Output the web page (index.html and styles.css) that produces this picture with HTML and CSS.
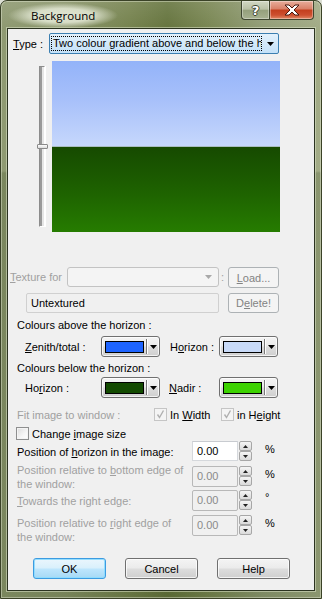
FILE: index.html
```html
<!DOCTYPE html>
<html lang="en">
<head>
<meta charset="utf-8">
<title>Background</title>
<link rel="stylesheet" href="styles.css">
</head>
<body>
<div class="window">
  <div class="titlebar">
    <div class="title"><span>Background</span></div>
    <div class="caption">
      <div class="cap-btn cap-help"><span class="qmark">?</span></div>
      <div class="cap-btn cap-close">
        <svg width="18" height="12" viewBox="0 0 18 12"><path d="M2 1 H6 L9 4 L12 1 H16 L11 6 L16 11 H12 L9 8 L6 11 H2 L7 6 Z" fill="#fff" stroke="#4a1a10" stroke-width="1" stroke-linejoin="round"/></svg>
      </div>
    </div>
  </div>
  <div class="client">
    <div class="row row-type">
      <span class="lbl-type"><u>T</u>ype :</span>
      <div class="combo combo-focus">
        <span class="combo-text">Two colour gradient above and below the h</span>
        <span class="combo-arrow"><svg width="7" height="4" viewBox="0 0 7 4"><path d="M0 0H7L3.5 4Z" fill="#000"/></svg></span>
      </div>
    </div>

    <div class="row row-preview">
      <div class="slider">
        <div class="track"></div>
        <div class="thumb"></div>
      </div>
      <div class="preview">
        <div class="sky"></div>
        <div class="ground"></div>
      </div>
    </div>

    <div class="row row-texture">
      <span class="lbl-texture dis"><u>T</u>exture for</span>
      <div class="combo combo-dis">
        <span class="combo-fill"></span>
        <span class="combo-arrow"><svg width="7" height="4" viewBox="0 0 7 4"><path d="M0 0H7L3.5 4Z" fill="#a8a8a8"/></svg></span>
      </div>
      <span class="colon dis">:</span>
      <div class="btn btn-dis btn-small"><span><u>L</u>oad...</span></div>
    </div>

    <div class="row row-untex">
      <div class="field">Untextured</div>
      <div class="btn btn-dis btn-small"><span>D<u>e</u>lete!</span></div>
    </div>

    <div class="section-label sl-above">Colours above the horizon :</div>
    <div class="row row-colors">
      <span class="clr-lbl1"><u>Z</u>enith/total :</span>
      <div class="clrbtn"><span class="swatch sw-zenith"></span><span class="clr-sep"></span><span class="clr-arrow"><svg width="7" height="4" viewBox="0 0 7 4"><path d="M0 0H7L3.5 4Z" fill="#000"/></svg></span></div>
      <span class="clr-lbl2">H<u>o</u>rizon :</span>
      <div class="clrbtn"><span class="swatch sw-skyhor"></span><span class="clr-sep"></span><span class="clr-arrow"><svg width="7" height="4" viewBox="0 0 7 4"><path d="M0 0H7L3.5 4Z" fill="#000"/></svg></span></div>
    </div>

    <div class="section-label sl-below">Colours below the horizon :</div>
    <div class="row row-colors row-colors2">
      <span class="clr-lbl1">Ho<u>r</u>izon :</span>
      <div class="clrbtn"><span class="swatch sw-gndhor"></span><span class="clr-sep"></span><span class="clr-arrow"><svg width="7" height="4" viewBox="0 0 7 4"><path d="M0 0H7L3.5 4Z" fill="#000"/></svg></span></div>
      <span class="clr-lbl2 clr-lbl2b"><u>N</u>adir :</span>
      <div class="clrbtn"><span class="swatch sw-nadir"></span><span class="clr-sep"></span><span class="clr-arrow"><svg width="7" height="4" viewBox="0 0 7 4"><path d="M0 0H7L3.5 4Z" fill="#000"/></svg></span></div>
    </div>

    <div class="row row-fit">
      <span class="lbl-fit dis">Fit image to window :</span>
      <div class="chk-item chk-item1">
        <span class="chk chk-dis"><svg width="11" height="11" viewBox="0 0 11 11"><path d="M2.5 5.5 L4.5 8.5 L8.5 1.5" fill="none" stroke="#b0b0b0" stroke-width="1.4"/></svg></span>
        <span class="chk-text">In <u>W</u>idth</span>
      </div>
      <div class="chk-item">
        <span class="chk chk-dis"><svg width="11" height="11" viewBox="0 0 11 11"><path d="M2.5 5.5 L4.5 8.5 L8.5 1.5" fill="none" stroke="#b0b0b0" stroke-width="1.4"/></svg></span>
        <span class="chk-text">in H<u>e</u>ight</span>
      </div>
    </div>

    <div class="row row-change">
      <span class="chk chk-en"></span>
      <span class="chk-text">Change <u>i</u>mage size</span>
    </div>

    <div class="row prow prow1">
      <span class="plabel">Position of <u>h</u>orizon in the image:</span>
      <div class="spinbox">0.00</div>
      <div class="spin">
        <span class="spin-btn"><svg width="5" height="3" viewBox="0 0 5 3"><path d="M0 3H5L2.5 0Z" fill="#222"/></svg></span>
        <span class="spin-btn"><svg width="5" height="3" viewBox="0 0 5 3"><path d="M0 0H5L2.5 3Z" fill="#222"/></svg></span>
      </div>
      <span class="unit">%</span>
    </div>

    <div class="row prow prow2">
      <span class="plabel dis"><span class="pl-line">Position relative to <u>b</u>ottom edge of</span><span class="pl-line">the window:</span></span>
      <div class="spinbox spinbox-dis">0.00</div>
      <div class="spin">
        <span class="spin-btn"><svg width="5" height="3" viewBox="0 0 5 3"><path d="M0 3H5L2.5 0Z" fill="#222"/></svg></span>
        <span class="spin-btn"><svg width="5" height="3" viewBox="0 0 5 3"><path d="M0 0H5L2.5 3Z" fill="#222"/></svg></span>
      </div>
      <span class="unit">%</span>
    </div>

    <div class="row prow prow3">
      <span class="plabel dis"><u>T</u>owards the right edge:</span>
      <div class="spinbox spinbox-dis">0.00</div>
      <div class="spin">
        <span class="spin-btn"><svg width="5" height="3" viewBox="0 0 5 3"><path d="M0 3H5L2.5 0Z" fill="#222"/></svg></span>
        <span class="spin-btn"><svg width="5" height="3" viewBox="0 0 5 3"><path d="M0 0H5L2.5 3Z" fill="#222"/></svg></span>
      </div>
      <span class="unit unit-deg">°</span>
    </div>

    <div class="row prow prow4">
      <span class="plabel plabel-low dis"><span class="pl-line">Position relative to <u>r</u>ight edge of</span><span class="pl-line">the window:</span></span>
      <div class="spinbox spinbox-dis">0.00</div>
      <div class="spin">
        <span class="spin-btn"><svg width="5" height="3" viewBox="0 0 5 3"><path d="M0 3H5L2.5 0Z" fill="#222"/></svg></span>
        <span class="spin-btn"><svg width="5" height="3" viewBox="0 0 5 3"><path d="M0 0H5L2.5 3Z" fill="#222"/></svg></span>
      </div>
      <span class="unit">%</span>
    </div>

    <div class="row row-buttons">
      <div class="btn btn-default"><span>OK</span></div>
      <div class="btn"><span>Cancel</span></div>
      <div class="btn"><span>Help</span></div>
    </div>
  </div>
</div>
</body>
</html>
```

FILE: styles.css
```css
* { box-sizing: border-box; }
html, body { margin: 0; padding: 0; }
body {
  width: 322px;
  height: 599px;
  overflow: hidden;
  background: #dcdfd4;
  font-family: "Liberation Sans", Arial, sans-serif;
  font-size: 11px;
  color: #000;
}
u { text-decoration: underline; text-underline-offset: 1px; }

.window {
  width: 322px;
  height: 599px;
  border: 1px solid #3a4227;
  border-radius: 7px 7px 0 0;
  display: flex;
  flex-direction: column;
  background:
    linear-gradient(180deg, rgba(255,255,255,0.10) 0, rgba(255,255,255,0) 27px),
    linear-gradient(180deg, rgba(0,0,0,0) 170px, rgba(30,50,5,0.18) 172px),
    linear-gradient(90deg, #8f9a72 0%, #8a956b 20%, #76834f 40%, #66753f 52%, #7a8754 65%, #939e78 82%, #a3ac87 100%);
  box-shadow: inset 0 0 0 1px rgba(230,235,215,0.45);
  overflow: hidden;
}

.titlebar {
  flex: none;
  height: 27px;
  display: flex;
  justify-content: space-between;
  align-items: flex-start;
}
.title {
  margin: 2px 0 0 7px;
  height: 25px;
  padding: 0 23px;
  display: flex;
  align-items: center;
  background: radial-gradient(closest-side, rgba(228,233,214,0.95) 0%, rgba(228,233,214,0.85) 55%, rgba(228,233,214,0.35) 82%, rgba(228,233,214,0) 100%);
  font-family: "Open Sans", "Liberation Sans", sans-serif;
  font-size: 11.5px;
  color: #000;
}

.caption {
  display: flex;
  margin-right: 7px;
  height: 19px;
}
.cap-btn {
  height: 19px;
  display: flex;
  align-items: center;
  justify-content: center;
  border: 1px solid #3f4630;
  border-top: none;
  box-shadow: inset 0 0 0 1px rgba(255,255,255,0.35);
}
.cap-help {
  width: 28px;
  border-radius: 0 0 0 4px;
  border-right: none;
  background: linear-gradient(180deg, #d2d8c4 0%, #b9c1a6 45%, #95a07c 52%, #a7b190 100%);
}
.qmark {
  font-family: "DejaVu Sans", sans-serif;
  font-weight: bold;
  font-size: 13px;
  color: #fff;
  text-shadow: -1px 0 #3c4330, 1px 0 #3c4330, 0 -1px #3c4330, 0 1px #3c4330;
  line-height: 1;
}
.cap-close {
  width: 45px;
  border-radius: 0 0 4px 0;
  background: linear-gradient(180deg, #e8ad9b 0%, #d9826a 42%, #c4401f 52%, #cd4f2f 78%, #e08a66 100%);
}

.client {
  flex: 1;
  margin: 0 6px 7px 6px;
  border: 1px solid #2b3320;
  background: #f0f0f0;
  box-shadow: 0 0 0 1px rgba(220,228,200,0.55);
  display: flex;
  flex-direction: column;
}

.row { display: flex; align-items: center; flex: none; }
.dis { color: #a0a0a0; }

/* Type row */
.row-type { margin-top: 4px; height: 21px; padding-left: 5px; }
.lbl-type { width: 36px; }
.combo {
  height: 21px;
  display: flex;
  align-items: center;
  border: 1px solid #acacac;
  border-radius: 2px;
}
.combo-focus {
  width: 230px;
  border-color: #3c7fb1;
  padding: 2px 0 2px 1px;
  background: linear-gradient(180deg, #e3f1fc 0%, #d3e9fa 50%, #c4e1f8 100%);
}
.combo-text {
  width: 211px;
  height: 15px;
  border: 1px dotted #000;
  line-height: 13px;
  padding-left: 1px;
  overflow: hidden;
  white-space: nowrap;
}
.combo-arrow {
  flex: 1;
  display: flex;
  justify-content: center;
  align-items: center;
}

/* Preview */
.row-preview { margin-top: 7px; height: 171px; padding-left: 29px; align-items: stretch; gap: 4px; }
.slider { width: 11px; position: relative; }
.track {
  margin: 5px 0 0 2px;
  width: 6px;
  height: 161px;
  border: 1px solid #8c8c8c;
  border-right-color: #fff;
  border-bottom-color: #fff;
  background: linear-gradient(90deg, #9a9a9a 0, #9a9a9a 2px, #e6e6e6 2px);
  box-shadow: 1px 0 0 #fff;
}
.thumb {
  position: absolute;
  left: 0;
  top: 83px;
  width: 11px;
  height: 5px;
  border: 1px solid #8a8a8a;
  border-radius: 1px;
  background: linear-gradient(#fdfdfd, #dcdcdc);
}
.preview { width: 228px; display: flex; flex-direction: column; }
.sky {
  height: 86px;
  background: linear-gradient(180deg, #93b3f9 0%, #a7c0fa 45%, #c6d7fc 100%);
  border-bottom: 1px solid #a9bdc0;
}
.ground { flex: 1; background: linear-gradient(180deg, #164a00 0%, #1e6300 55%, #267c00 100%); }

/* Texture rows */
.row-texture { margin-top: 35px; height: 21px; padding-left: 2px; align-items: flex-start; }
.lbl-texture { width: 57px; line-height: 20px; }
.combo-dis {
  width: 152px;
  height: 20px;
  border-color: #c3c3c3;
  background: #f4f4f4;
  border-radius: 3px;
  padding-right: 3px;
}
.combo-fill { flex: 1; }
.combo-dis .combo-arrow { flex: none; width: 13px; }
.colon { width: 9px; padding-left: 2px; line-height: 20px; }

.btn {
  width: 73px;
  height: 21px;
  display: flex;
  align-items: center;
  justify-content: center;
  border: 1px solid #707070;
  border-radius: 3px;
  background: linear-gradient(180deg, #f4f4f4 0%, #ebebeb 48%, #dddddd 52%, #cfcfcf 100%);
  box-shadow: inset 0 0 0 1px rgba(255,255,255,0.75);
}
.btn-small { width: 51px; }
.btn-dis {
  border-color: #adb2b5;
  background: #f4f4f4;
  color: #838383;
  box-shadow: none;
}
.row-untex { margin-top: 5px; height: 20px; padding-left: 18px; }
.row-untex .btn { height: 20px; margin-left: 9px; }
.field {
  width: 193px;
  height: 20px;
  border: 1px solid #d0d0d0;
  border-radius: 2px;
  background: #f0f0f0;
  padding-left: 4px;
  line-height: 18px;
}

/* Colours */
.section-label { flex: none; height: 14px; line-height: 14px; padding-left: 9px; }
.sl-above { margin-top: 5px; }
.sl-below { margin-top: 4px; }
.row-colors { margin-top: 4px; height: 21px; padding-left: 17px; }
.row-colors2 { margin-top: 2px; }
.clr-lbl1 { width: 76px; }
.clr-lbl2 { width: 49px; margin-left: 10px; }
.clr-lbl2b { width: 50px; margin-left: 9px; }
.clrbtn {
  width: 59px;
  height: 21px;
  display: flex;
  align-items: center;
  padding-left: 3px;
  border: 1px solid #707070;
  border-radius: 3px;
  background: linear-gradient(180deg, #f4f4f4 0%, #ebebeb 48%, #dddddd 52%, #cfcfcf 100%);
  box-shadow: inset 0 0 0 1px rgba(255,255,255,0.75);
}
.swatch { width: 39px; height: 12px; border: 1px solid #000; }
.sw-zenith { background: #1e64ff; }
.sw-skyhor { background: #c8daf8; }
.sw-gndhor { background: #124a00; }
.sw-nadir { background: #3cd200; }
.clr-sep {
  width: 2px;
  height: 15px;
  margin-left: 2px;
  border-left: 1px solid #7a7a7a;
  border-right: 1px solid #fff;
}
.clr-arrow { flex: 1; display: flex; justify-content: center; align-items: center; }

/* Fit rows */
.row-fit { margin-top: 10px; height: 13px; padding-left: 9px; }
.lbl-fit { width: 137px; }
.chk-item { display: flex; align-items: center; }
.chk-item1 { width: 67px; }
.chk {
  width: 13px;
  height: 13px;
  flex: none;
  display: flex;
  align-items: center;
  justify-content: center;
  border: 1px solid #8e8f8f;
  background: linear-gradient(135deg, #dcdcdc 0%, #f6f6f6 60%, #ffffff 100%);
  box-shadow: inset 0 0 0 1px #f4f4f4;
}
.chk-dis {
  border-color: #c5c5c5;
  background: #f4f4f4;
  box-shadow: none;
}
.chk-text { margin-left: 3px; }
.row-change { margin-top: 6px; height: 13px; padding-left: 8px; }

/* Position rows */
.prow { height: 21px; padding-left: 9px; }
.prow1 { margin-top: 1px; }
.prow2 { margin-top: 4px; }
.prow3 { margin-top: 3px; }
.prow4 { margin-top: 4px; }
.plabel { width: 175px; line-height: 14px; flex: none; padding-right: 8px; }
.pl-line { display: block; white-space: nowrap; }
.plabel-low { align-self: flex-start; margin-top: 1px; }
.spinbox {
  width: 46px;
  height: 21px;
  border: 1px solid #d5d8dc;
  border-top-color: #c8cbd0;
  background: #fff;
  padding-left: 4px;
  line-height: 19px;
  flex: none;
}
.prow1 .spinbox { height: 20px; align-self: flex-start; }
.spinbox-dis {
  background: #f0f0f0;
  border-color: #b8b8b8;
  border-radius: 2px;
  color: #8a8a8a;
}
.spin {
  width: 13px;
  height: 20px;
  margin-left: 1px;
  display: flex;
  flex-direction: column;
  gap: 0;
  align-self: flex-start;
}
.spin-btn {
  height: 10px;
  display: flex;
  align-items: center;
  justify-content: center;
  border: 1px solid #a7a7a7;
  border-radius: 2px;
  background: linear-gradient(180deg, #f5f5f5, #dadada);
}
.unit { margin-left: 13px; align-self: flex-start; line-height: 16px; }
.unit-deg { line-height: 14px; }

/* Buttons */
.row-buttons { margin-top: 22px; height: 21px; padding-left: 25px; gap: 19px; }
.btn-default {
  border-color: #3c9be0;
  background: linear-gradient(180deg, #eaf6fd 0%, #d9f0fc 48%, #bee6fd 52%, #a7d9f5 100%);
  box-shadow: inset 0 0 0 1px rgba(140,220,255,0.9);
}
```
